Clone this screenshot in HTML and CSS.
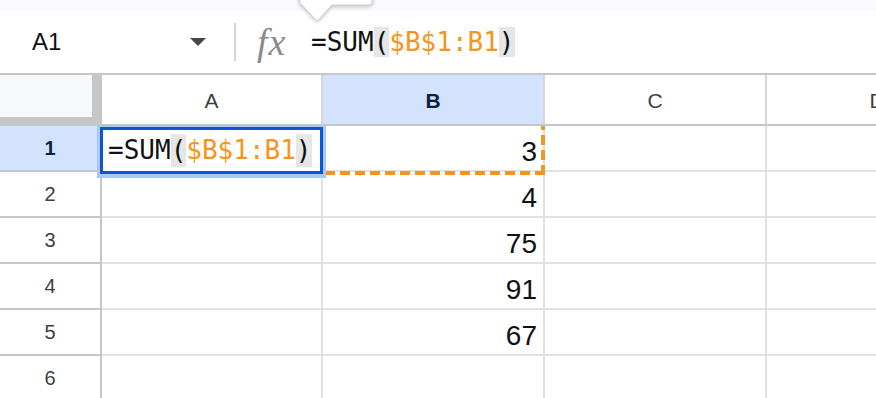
FILE: index.html
```html
<!DOCTYPE html>
<html lang="en">
<head>
    <meta charset="UTF-8">
    <title>Sheet</title>
    <link rel="stylesheet" href="styles.css">
</head>
<body>
    <div class="topbar"></div>

    <div class="formula-bar">
        <div class="name-box">
            <span class="cell-ref">A1</span>
            <span class="caret"></span>
        </div>
        <div class="divider"></div>
        <span class="fx">fx</span>
        <div class="formula">=SUM<span class="paren">(</span><span class="ref">$B$1:B1</span><span class="paren">)</span></div>
    </div>

    <svg class="tooltip-tail" width="82" height="32" viewBox="0 0 82 32">
        <path d="M4,0 H76 V8 Q76,11 73,11 H36 L21,27 L6,11 Q4,11 4,9 Z" fill="#fff" stroke="#cfcfcf" stroke-width="1"/>
    </svg>

    <div class="sheet">
        <div class="corner"></div>
        <div class="col-head">A</div>
        <div class="col-head active">B</div>
        <div class="col-head">C</div>
        <div class="col-head">D</div>

        <div class="row-head active">1</div>
        <div class="cell">
            <div class="editor">=SUM<span class="paren">(</span><span class="ref">$B$1:B1</span><span class="paren">)</span></div>
        </div>
        <div class="cell num">3<div class="copy-range"></div></div>
        <div class="cell"></div>
        <div class="cell"></div>

        <div class="row-head">2</div>
        <div class="cell"></div>
        <div class="cell num">4</div>
        <div class="cell"></div>
        <div class="cell"></div>

        <div class="row-head">3</div>
        <div class="cell"></div>
        <div class="cell num">75</div>
        <div class="cell"></div>
        <div class="cell"></div>

        <div class="row-head">4</div>
        <div class="cell"></div>
        <div class="cell num">91</div>
        <div class="cell"></div>
        <div class="cell"></div>

        <div class="row-head">5</div>
        <div class="cell"></div>
        <div class="cell num">67</div>
        <div class="cell"></div>
        <div class="cell"></div>

        <div class="row-head">6</div>
        <div class="cell"></div>
        <div class="cell"></div>
        <div class="cell"></div>
        <div class="cell"></div>
    </div>
</body>
</html>
```

FILE: styles.css
```css
body {
    margin: 0;
    width: 876px;
    height: 398px;
    overflow: hidden;
    position: relative;
    font-family: "Liberation Sans", Arial, sans-serif;
    background-color: #fff;
    color: #1f1f1f;
}
.topbar {
    height: 11px;
    background-color: #f8fafd;
}
.formula-bar {
    display: flex;
    align-items: center;
    height: 62px;
    border-bottom: 2px solid #c4c7c5;
    background: #fff;
}
.name-box {
    box-sizing: border-box;
    width: 214px;
    padding: 0 8px 0 32px;
    display: flex;
    align-items: center;
    justify-content: space-between;
}
.cell-ref {
    font-size: 24px;
    color: #111;
}
.caret {
    width: 0;
    height: 0;
    border-left: 8px solid transparent;
    border-right: 8px solid transparent;
    border-top: 8px solid #444746;
}
.divider {
    width: 2px;
    height: 38px;
    margin-left: 20px;
    background: #d3d3d3;
}
.fx {
    width: 33px;
    margin-left: 21px;
    font-family: "Liberation Serif", serif;
    font-style: italic;
    font-size: 38px;
    line-height: 34px;
    letter-spacing: 1px;
    color: #8a8a8a;
}
.formula {
    margin-left: 21px;
    font-family: "DejaVu Sans Mono", "Liberation Mono", monospace;
    font-size: 26px;
    line-height: 32px;
    color: #111;
}
.paren {
    background: #e6e6e6;
}
.ref {
    color: #f7941d;
}
.tooltip-tail {
    position: absolute;
    left: 296px;
    top: -6px;
    filter: drop-shadow(0 1px 2px rgba(0, 0, 0, 0.25));
}
.sheet {
    display: grid;
    grid-template-columns: 102px 221px 222px 222px 222px;
    grid-template-rows: 51px repeat(6, 46px);
}
.sheet > div {
    box-sizing: border-box;
}
.corner {
    background: #f8f9fa;
    border-right: 10px solid #c4c7c5;
    border-bottom: 9px solid #c4c7c5;
}
.col-head {
    display: flex;
    align-items: center;
    justify-content: center;
    padding-top: 3px;
    border-right: 2px solid #d6d6d6;
    border-bottom: 2px solid #c4c7c5;
    font-size: 21px;
    color: #3c3f3e;
}
.row-head {
    display: flex;
    align-items: center;
    justify-content: center;
    border-right: 2px solid #c4c7c5;
    border-bottom: 2px solid #c4c7c5;
    font-size: 20px;
    color: #3c3f3e;
}
.col-head.active,
.row-head.active {
    background: #d3e3fd;
    color: #0b1f48;
    font-weight: bold;
}
.cell {
    position: relative;
    border-right: 2px solid #e1e1e1;
    border-bottom: 2px solid #e1e1e1;
}
.cell.num {
    display: flex;
    align-items: flex-end;
    justify-content: flex-end;
    padding: 0 6px 4px 0;
    font-size: 28px;
    line-height: 28px;
    color: #111;
}
.editor {
    position: absolute;
    left: -2px;
    top: 1px;
    width: 223px;
    height: 47px;
    box-sizing: border-box;
    display: flex;
    align-items: center;
    padding-left: 5px;
    border: 3px solid #0b57d0;
    box-shadow: 0 1px 0 3px #a8c7fa;
    background: #fff;
    font-family: "DejaVu Sans Mono", "Liberation Mono", monospace;
    font-size: 26px;
    line-height: 33px;
    color: #111;
    z-index: 2;
}
.copy-range {
    position: absolute;
    left: 0;
    top: 0;
    width: 222px;
    height: 49px;
    background:
        repeating-linear-gradient(270deg, #f7941d 0 10px, transparent 10px 15px) right bottom / 100% 4px no-repeat,
        repeating-linear-gradient(0deg, #f7941d 0 10px, transparent 10px 15px) right bottom / 4px 100% no-repeat;
    z-index: 1;
}
```
